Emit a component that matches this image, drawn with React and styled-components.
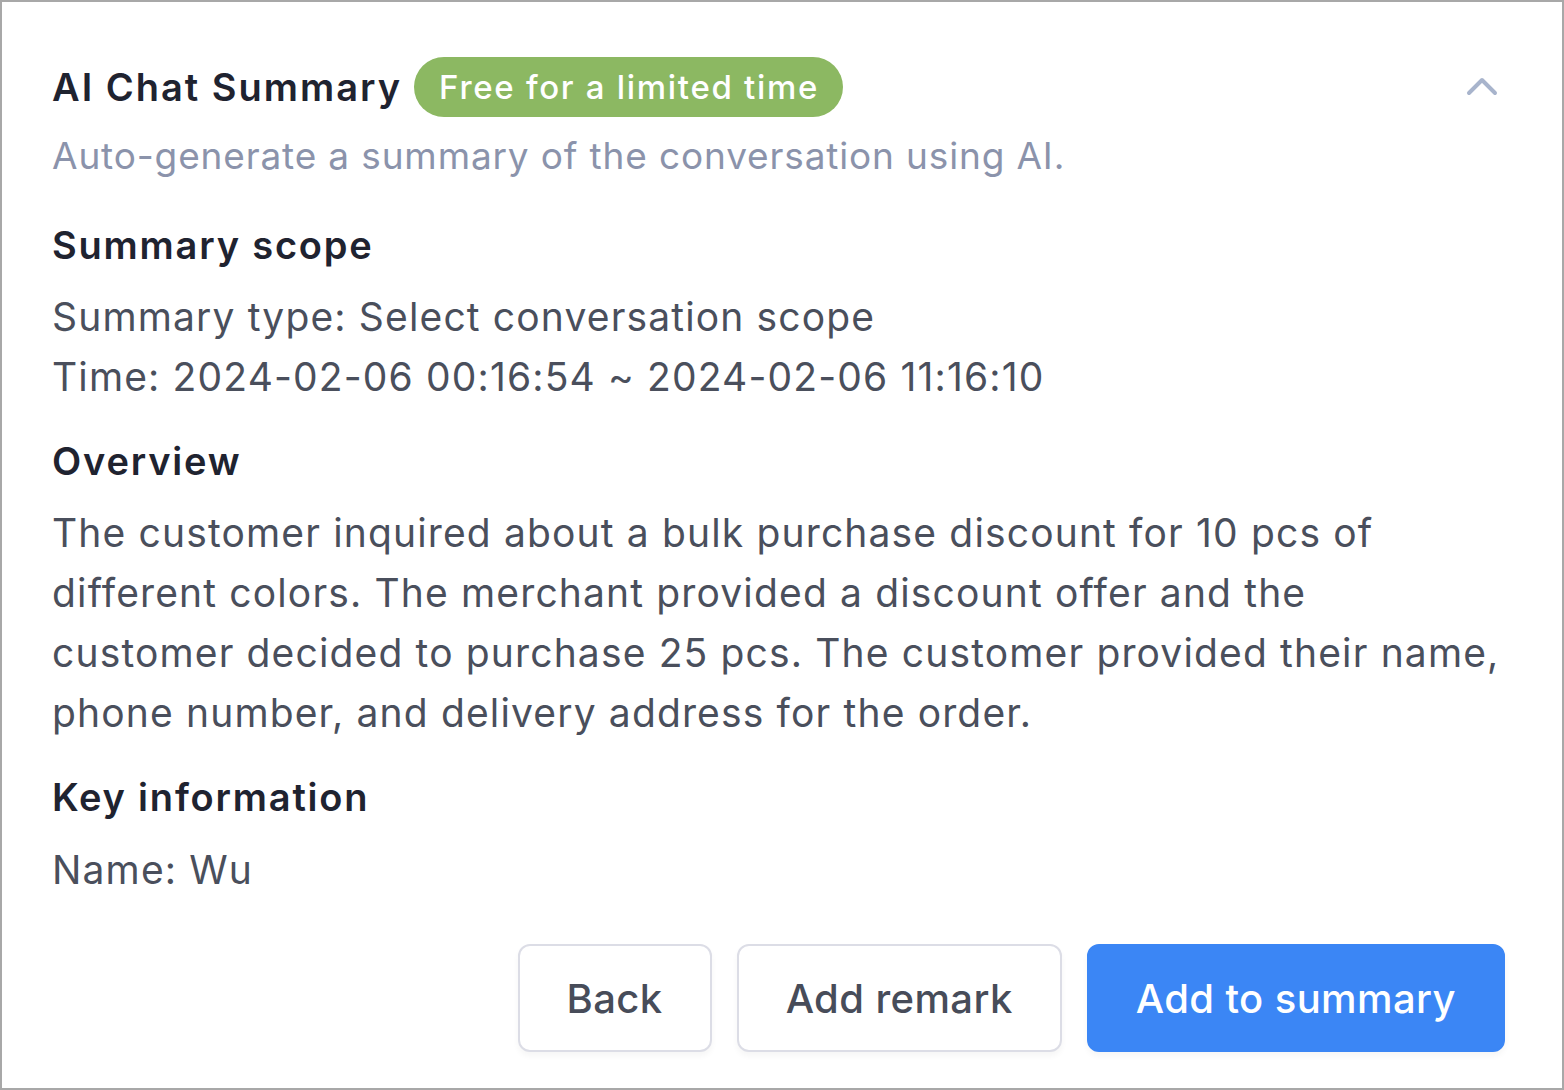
import styled, { createGlobalStyle } from "styled-components";

const GlobalStyle = createGlobalStyle`
  html, body {
    margin: 0;
    padding: 0;
    background: #ffffff;
  }
  * {
    box-sizing: border-box;
  }
`;

const Panel = styled.div`
  width: 1564px;
  height: 1090px;
  border: 2px solid #a8a8a8;
  padding: 55px 57px 0 50px;
  font-family: Inter, "Noto Sans", sans-serif;
  display: flex;
  flex-direction: column;
  background: #fff;
`;

const HeaderRow = styled.div`
  display: flex;
  align-items: center;
  height: 60px;
`;

const Title = styled.h1`
  margin: 0;
  font-size: 38px;
  font-weight: 600;
  color: #1f2330;
  letter-spacing: 2px;
`;

const Badge = styled.span`
  margin-left: 12px;
  height: 60px;
  padding: 0 24px 0 25px;
  border-radius: 30px;
  background: #8cb862;
  color: #fff;
  font-size: 33px;
  font-weight: 500;
  letter-spacing: 1.7px;
  display: inline-flex;
  align-items: center;
`;

const Toggle = styled.button`
  margin-left: auto;
  margin-right: 7px;
  border: none;
  background: none;
  padding: 0;
  display: flex;
  cursor: pointer;
`;

const Subtitle = styled.p`
  margin: 9px 0 0;
  font-size: 37px;
  line-height: 60px;
  letter-spacing: 0.85px;
  color: #8b93ab;
`;

const Heading = styled.h2`
  margin: ${(p) => p.$top}px 0 0;
  font-size: 38px;
  line-height: 60px;
  font-weight: 600;
  letter-spacing: 1.8px;
  color: #1f2330;
`;

const Body = styled.div`
  margin-top: ${(p) => p.$top}px;
  font-size: 39px;
  line-height: 60px;
  letter-spacing: 1.15px;
  color: #4a4f5c;
`;

const Line = styled.div`
  white-space: nowrap;
`;

const Actions = styled.div`
  margin-top: 44px;
  display: flex;
  justify-content: flex-end;
  gap: 25px;
`;

const ActionButton = styled.button`
  height: 108px;
  padding: 0 47px;
  border-radius: 12px;
  font-family: inherit;
  font-size: 40px;
  font-weight: 500;
  letter-spacing: 0.4px;
  cursor: pointer;
  border: 2px solid ${(p) => (p.$primary ? "#3b86f5" : "#dcdde6")};
  background: ${(p) => (p.$primary ? "#3b86f5" : "#fff")};
  color: ${(p) => (p.$primary ? "#fff" : "#474c59")};
  box-shadow: 0 4px 6px rgba(0, 0, 0, 0.04);
`;

export default function App() {
  return (
    <>
      <GlobalStyle />
      <Panel>
        <HeaderRow>
          <Title>AI Chat Summary</Title>
          <Badge>Free for a limited time</Badge>
          <Toggle aria-label="Collapse">
            <svg width="32" height="22" viewBox="0 0 32 22">
              <path
                d="M3 17 L16 4 L29 17"
                fill="none"
                stroke="#a8b4cc"
                strokeWidth="4"
                strokeLinecap="round"
                strokeLinejoin="round"
              />
            </svg>
          </Toggle>
        </HeaderRow>
        <Subtitle>Auto-generate a summary of the conversation using AI.</Subtitle>

        <Heading $top={29}>Summary scope</Heading>
        <Body $top={12}>
          <Line>Summary type: Select conversation scope</Line>
          <Line>Time: 2024-02-06 00:16:54 ~ 2024-02-06 11:16:10</Line>
        </Body>

        <Heading $top={24}>Overview</Heading>
        <Body $top={12}>
          <Line>
            The customer inquired about a bulk purchase discount for 10 pcs of
          </Line>
          <Line>different colors. The merchant provided a discount offer and the</Line>
          <Line>
            customer decided to purchase 25 pcs. The customer provided their
            name,
          </Line>
          <Line>phone number, and delivery address for the order.</Line>
        </Body>

        <Heading $top={24}>Key information</Heading>
        <Body $top={13}>
          <Line>Name: Wu</Line>
        </Body>

        <Actions>
          <ActionButton>Back</ActionButton>
          <ActionButton>Add remark</ActionButton>
          <ActionButton $primary>Add to summary</ActionButton>
        </Actions>
      </Panel>
    </>
  );
}
